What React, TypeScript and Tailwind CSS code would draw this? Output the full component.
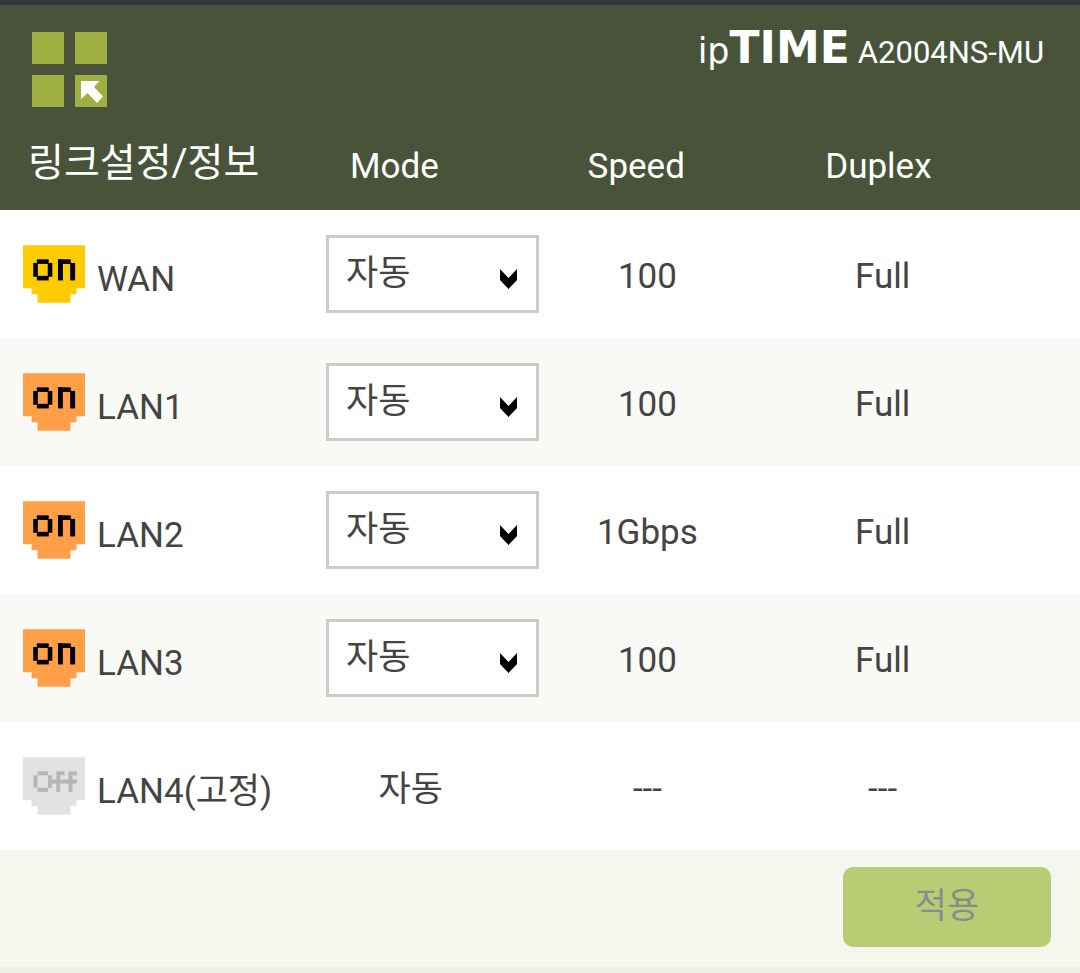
import React from 'react';

interface Port {
  name: string;
  status: 'wan' | 'lan' | 'off';
  speed: string;
  duplex: string;
  fixed?: boolean;
}

const ports: Port[] = [
  { name: 'WAN', status: 'wan', speed: '100', duplex: 'Full' },
  { name: 'LAN1', status: 'lan', speed: '100', duplex: 'Full' },
  { name: 'LAN2', status: 'lan', speed: '1Gbps', duplex: 'Full' },
  { name: 'LAN3', status: 'lan', speed: '100', duplex: 'Full' },
  { name: 'LAN4(고정)', status: 'off', speed: '---', duplex: '---', fixed: true },
];

function PortIcon({ status }: { status: Port['status'] }) {
  const getPlugColor = () => {
    switch (status) {
      case 'wan': return 'fill-[#ffcc00]';
      case 'lan': return 'fill-[#ff9f48]';
      default: return 'fill-[#e2e2e2]';
    }
  };

  return (
    <svg
      role="img"
      aria-label={status === 'off' ? 'off' : 'on'}
      viewBox="0 0 188 175"
      className="h-[58px] w-[62px] shrink-0"
    >
      <path className={getPlugColor()} d="M0 0H188V131H162V149H144V175H44V149H26V131H0Z" />
      {status === 'off' ? (
        <g className="fill-[#b5b5b5]">
          <rect x="44" y="43" width="32" height="12" />
          <rect x="32" y="55" width="12" height="38" />
          <rect x="76" y="55" width="12" height="38" />
          <rect x="44" y="93" width="32" height="12" />
          <rect x="101" y="43" width="25" height="12" />
          <rect x="101" y="55" width="12" height="50" />
          <rect x="138" y="43" width="25" height="12" />
          <rect x="138" y="55" width="12" height="50" />
          <rect x="88" y="68" width="75" height="12" />
        </g>
      ) : (
        <g className="fill-black">
          <rect x="42" y="43" width="36" height="14" />
          <rect x="31" y="54" width="14" height="42" />
          <rect x="75" y="54" width="14" height="42" />
          <rect x="42" y="93" width="36" height="14" />
          <rect x="106" y="43" width="39" height="14" />
          <rect x="106" y="43" width="15" height="64" />
          <rect x="143" y="54" width="15" height="53" />
        </g>
      )}
    </svg>
  );
}

function ModeSelect({ port }: { port: string }) {
  return (
    <div className="relative w-[213px]">
      <select
        aria-label={`${port} Mode`}
        className="block h-[78px] w-full appearance-none border-3 border-[#cccccc] bg-white pl-[17px] text-[35px] leading-[52px] text-[#444444]"
      >
        <option>자동</option>
      </select>
      <svg viewBox="0 0 17 20" className="pointer-events-none absolute top-[34px] right-[22px] h-5 w-[17px]">
        <path d="M0 0L8.500 9L17 0V11L8.500 20L0 11Z" />
      </svg>
    </div>
  );
}

export default function App() {
  return (
    <div className="min-h-screen bg-[#f5f6ee] font-['Roboto','Noto_Sans_CJK_KR',sans-serif] text-[35px] leading-[52px] text-[#444444]">
      {/* Top bar */}
      <header className="flex items-start justify-between border-t-5 border-[#36363b] bg-[#48533a] px-8 pt-[27px] text-white">
        <button type="button" aria-label="메뉴" className="block">
          <svg viewBox="0 0 75 75" className="size-[75px]">
            <path className="fill-[#a0af42]" d="M0 0H32V32H0ZM43 0H75V32H43ZM0 43H32V75H0ZM43 43H75V75H43Z" />
            <path className="fill-white" d="M49 49H67.500L62 55L71 64.500L65 71L55.500 61L49 67Z" />
          </svg>
        </button>
        <div className="flex items-baseline gap-2 pr-1 leading-8">
          <span className="font-['DejaVu_Sans',sans-serif] text-[35px]">
            ip<b className="text-[44px]">TIME</b>
          </span>
          <span className="text-[31px]">A2004NS-MU</span>
        </div>
      </header>

      <table className="w-full table-fixed border-collapse">
        <colgroup>
          <col className="w-[30%]" />
          <col className="w-[22%]" />
          <col className="w-[22%]" />
          <col className="w-[26%]" />
        </colgroup>
        <thead className="bg-[#48533a] text-left text-white">
          <tr className="h-[103px]">
            <th scope="col" className="pt-2 pl-7 text-[39px] font-normal">링크설정/정보</th>
            <th scope="col" className="pt-4 pl-[26px] font-normal">Mode</th>
            <th scope="col" className="pt-4 pl-[26px] font-normal">Speed</th>
            <th scope="col" className="pt-4 pl-[26px] font-normal">Duplex</th>
          </tr>
        </thead>
        <tbody>
          {ports.map((port) => (
            <tr key={port.name} className="h-32 bg-white even:bg-[#f9faf6]">
              <td className="pl-[23px]">
                <div className="flex items-center gap-3">
                  <PortIcon status={port.status} />
                  <span className="pt-3">{port.name}</span>
                </div>
              </td>
              {port.fixed ? (
                <td className="pt-2 pr-16 text-center">자동</td>
              ) : (
                <td className="pl-0.5">
                  <ModeSelect port={port.name} />
                </td>
              )}
              <td className="pt-1.5 pr-[66px] text-center">{port.speed}</td>
              <td className="pt-1.5 pr-[114px] text-center">{port.duplex}</td>
            </tr>
          ))}
        </tbody>
      </table>

      {/* Apply */}
      <footer className="flex justify-end border-b-6 border-[#eef0e6] px-[29px] pt-[17px] pb-5">
        <button
          type="button"
          disabled
          className="h-20 w-52 rounded-[10px] bg-[#b8cc74] text-[#8b8b8b]"
        >
          적용
        </button>
      </footer>
    </div>
  );
}
